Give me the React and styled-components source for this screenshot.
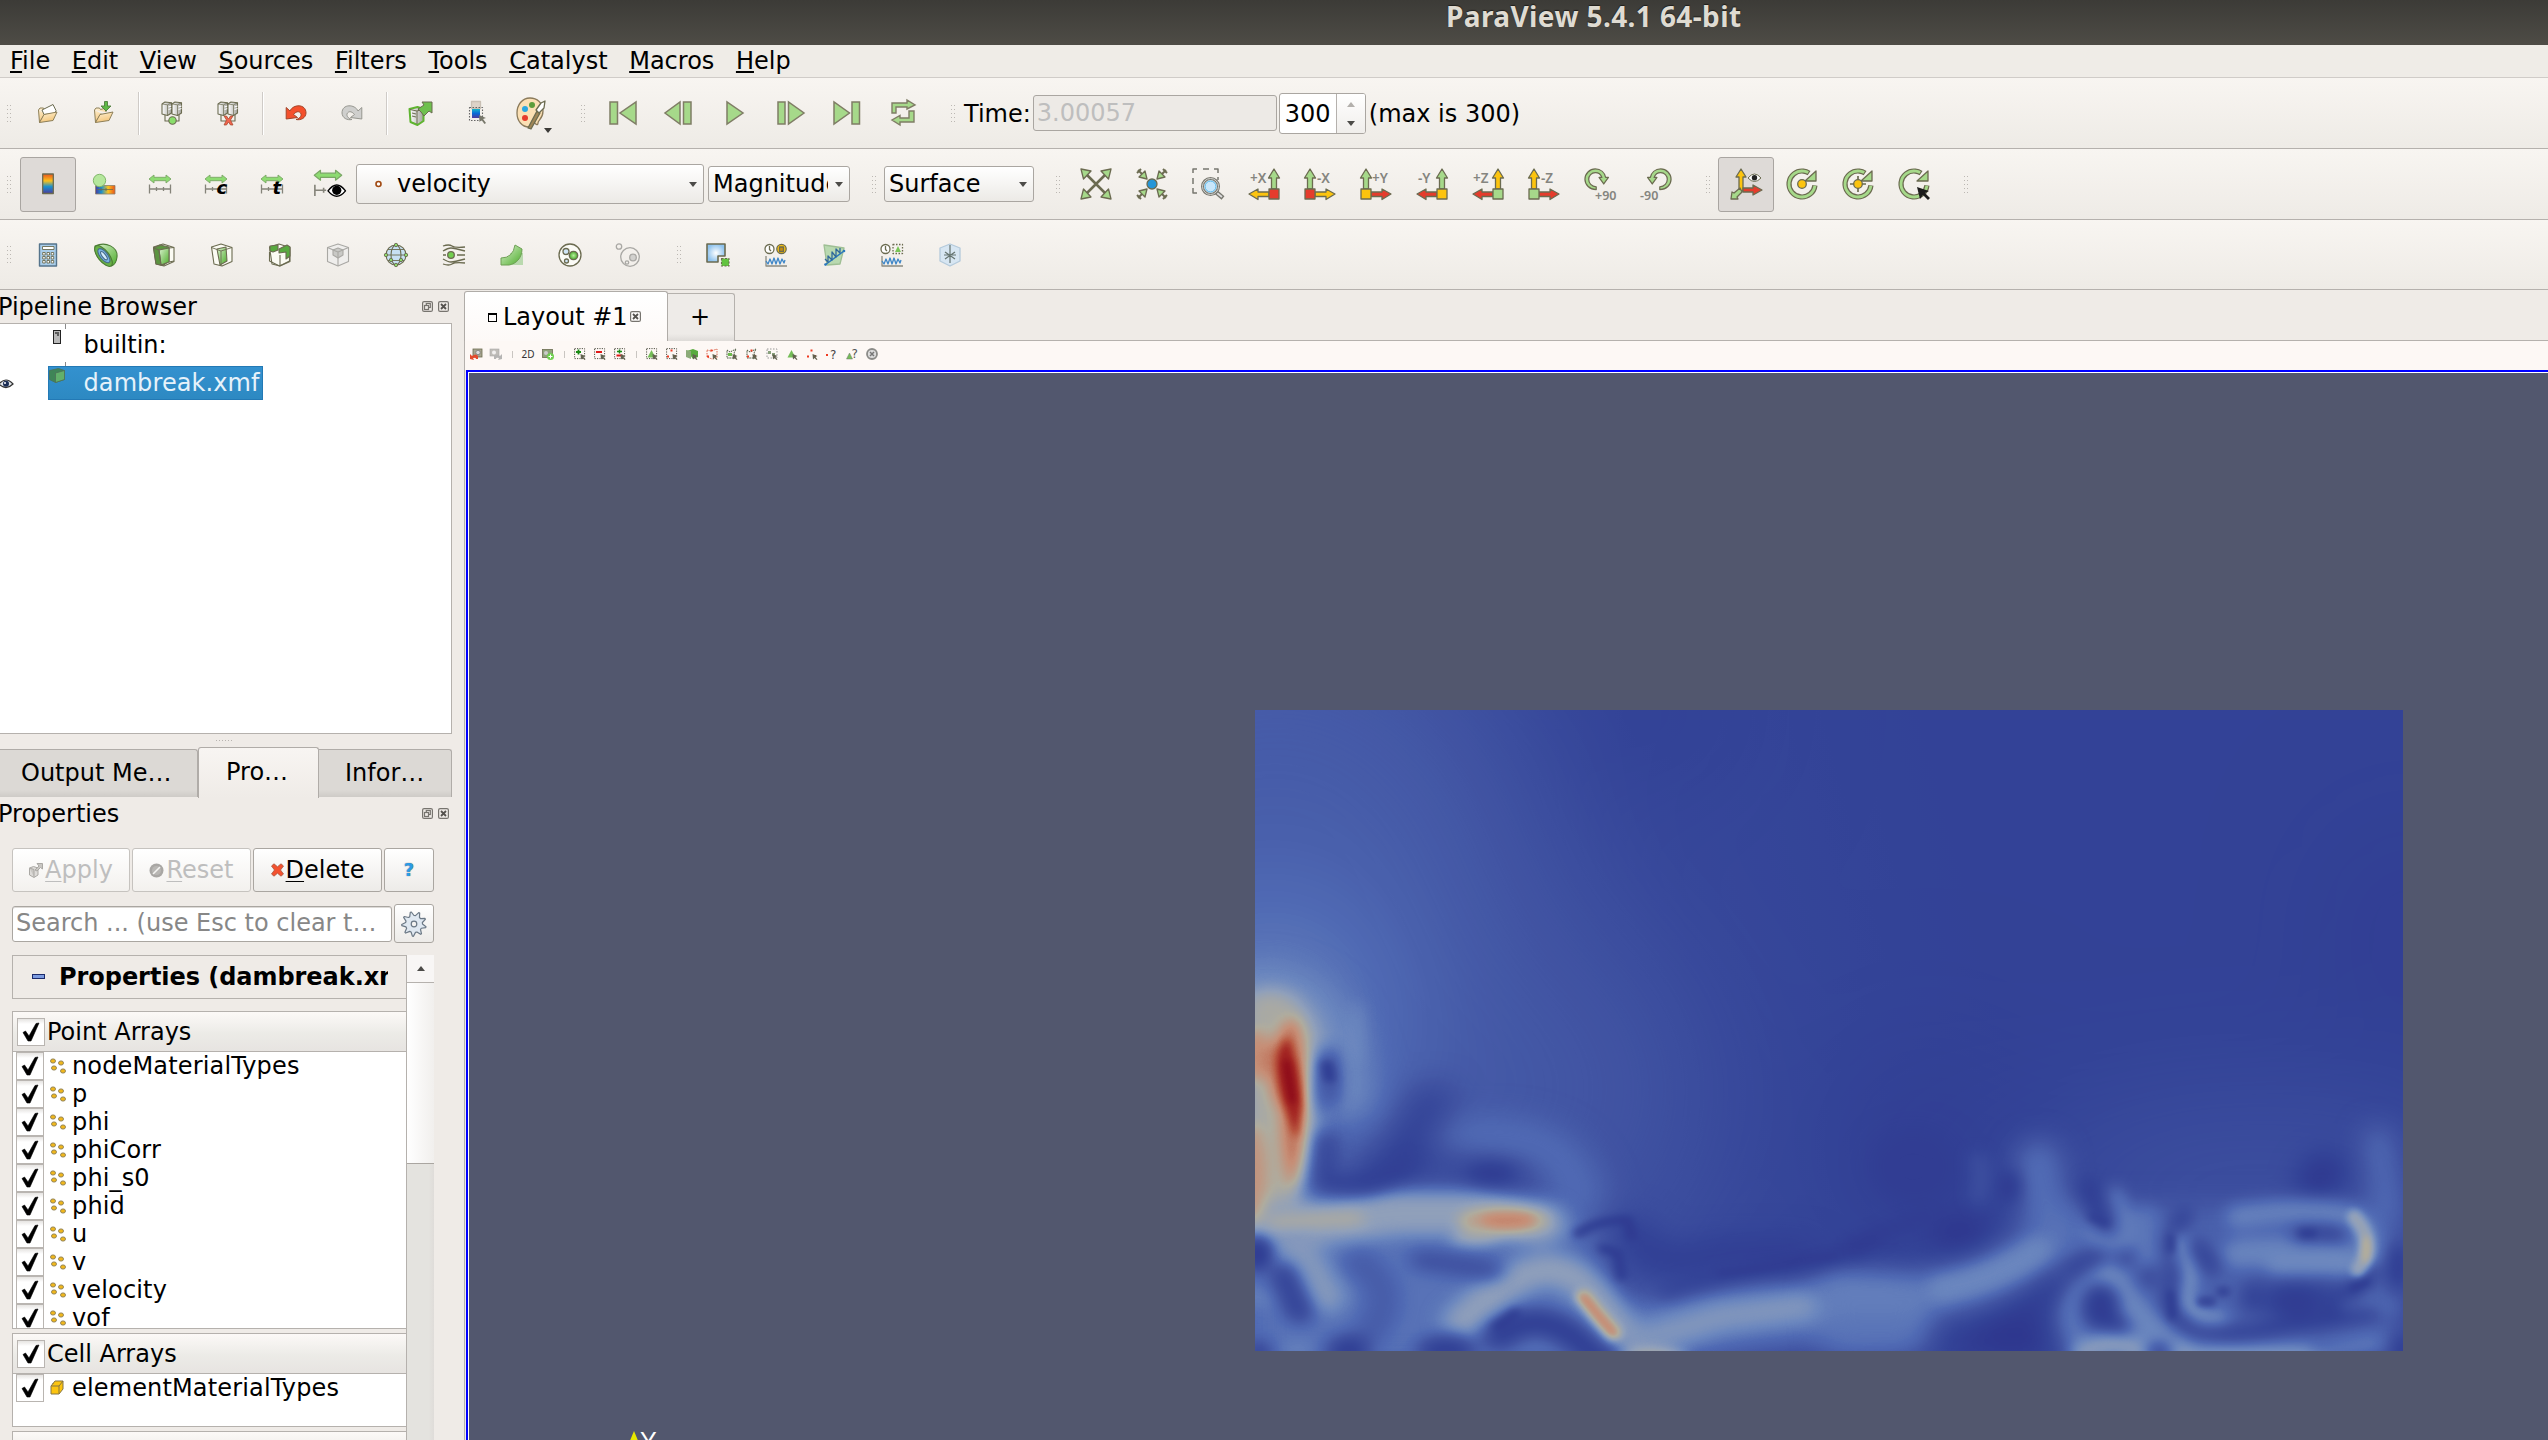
import React from "react";
import styled, { createGlobalStyle, css } from "styled-components";

const GlobalStyle = createGlobalStyle`
  * { box-sizing: border-box; }
  html, body { margin: 0; padding: 0; overflow: hidden; }
  body { font: 24px/28px "DejaVu Sans", sans-serif; color: #000; background: #efebe7; }
  svg { display: block; flex: none; overflow: visible; }
`;

const OL = "#6b6b50";
const GREEN = "#a6d98a";
const YEL = "#fcc40f";
const RED = "#e53c2c";

/* ---------- shell ---------- */
const Window = styled.div`
  width: 2548px; height: 1440px; display: flex; flex-direction: column; overflow: hidden; background: #efebe7;
`;
const TitleBar = styled.div`
  flex: none; height: 45px; display: flex; padding-left: 1446px;
  background: linear-gradient(#3c3b37, #4e4c46);
  color: #dfdbd2; font: 700 28px/33px "Noto Sans", sans-serif; letter-spacing: 0.4px; white-space: pre;
  text-shadow: 0 -1px 1px #1e1d1a;
`;
const MenuBar = styled.div`
  flex: none; height: 33px; display: flex; gap: 21.6px; padding: 2px 0 0 10px; border-bottom: 1px solid #d0ccc8; background: #efece7;
`;
const Mn = styled.span`
  text-decoration: underline; text-decoration-thickness: ${(p) => p.$w || 2}px; text-underline-offset: ${(p) => p.$o || 2}px;
  text-decoration-skip-ink: none;
`;
const ToolBar = styled.div`
  flex: none; height: ${(p) => p.$h || 71}px; display: flex; align-items: center; padding-left: 6px;
  background: linear-gradient(#f8f5f1, #eeebe6); border-bottom: 1px solid #b5b1ad;
`;
const Handle = styled.div`
  flex: none; width: 4px; height: 17px; margin-left: ${(p) => (p.$l || 0) + 1}px; margin-right: ${(p) => (p.$r || 0) + 1}px;
  background: radial-gradient(circle at 0.5px 0.5px, #bcb8b3 0.7px, transparent 0.9px) 0 0 / 3px 4px;
`;
const Tool = styled.div`
  position: relative; flex: none; width: ${(p) => p.$w || 56}px; height: 55px; display: flex; align-items: center; justify-content: center;
  border-radius: 3px; border: 1px solid transparent;
  ${(p) => p.$on && css`background: #dedad7; border-color: #a9a5a1;`}
`;
const Sep = styled.div`
  flex: none; width: 1px; height: 43px; margin: 0 5.5px; background: #cfcbc7; box-shadow: 1px 0 #fff;
`;
const Label = styled.span`white-space: pre; margin-left: ${(p) => p.$l || 0}px; padding-top: ${(p) => p.$t || 0}px;`;
const Caret = styled.i`
  flex: none; border: 4px solid transparent; border-bottom-width: 0; border-top: 5px solid ${(p) => p.$c || "#4c4b48"};
  ${(p) => p.$up && css`transform: rotate(180deg);`}
`;
const DropMark = styled.span`position: absolute; right: 7px; bottom: 7px; display: flex;`;
const Combo = styled.div`
  flex: none; width: ${(p) => p.$w}px; height: ${(p) => p.$h || 36}px; margin-left: ${(p) => p.$l || 0}px;
  display: flex; align-items: center; padding: 0 6px 0 4px; border: 1px solid #aaa6a1; border-radius: 3px;
  background: linear-gradient(#fff, #eceae6);
`;
const ComboText = styled.span`flex: 1; overflow: hidden; white-space: pre; margin-right: ${(p) => p.$r || 0}px;`;
const TimeField = styled.div`
  flex: none; width: 244px; height: 36px; padding: 3px 3px; border: 1px solid #aaa6a1; border-radius: 3px; background: #edeae6; color: #bebebe; margin-left: 2px;
`;
const Spin = styled.div`
  flex: none; width: 87px; height: 41px; margin: 0 3px 0 2px; display: flex; border: 1px solid #aaa6a1; border-radius: 3px; background: #fff; overflow: hidden;
`;
const SpinText = styled.div`width: 57px; padding: 6px 0 0 5px; border-right: 1px solid #b5b1ad;`;
const SpinBtns = styled.div`
  flex: 1; display: flex; flex-direction: column; align-items: center; justify-content: space-between; padding: 8px 0 7px; background: linear-gradient(#fff, #f0eeeb);
`;

/* ---------- docks ---------- */
const Main = styled.div`flex: 1; min-height: 0; display: flex;`;
const Dock = styled.div`flex: none; width: 464px; display: flex; flex-direction: column; overflow: hidden;`;
const DockTitle = styled.div`
  flex: none; height: ${(p) => p.$h}px; padding: 3px 15px 0 0; display: flex; align-items: flex-start; gap: 5px;
`;
const DockName = styled.span`flex: 1; margin-left: -2px;`;
const DockBtn = styled.span`display: flex; padding-top: 8px;`;
const Tree = styled.div`
  flex: none; width: 452px; height: 411px; border: 1px solid #b5b1ad; border-left: 0; background: #fff;
`;
const TreeRow = styled.div`height: ${(p) => p.$h}px; display: flex; position: relative;`;
const TreeEye = styled.div`width: 48px; padding-top: 13px;`;
const TreeItem = styled.div`
  height: ${(p) => p.$h}px; width: ${(p) => p.$w || 215}px; display: flex; border: 1px solid transparent; padding-top: ${(p) => p.$t}px;
  ${(p) => p.$sel && css`background: linear-gradient(#3391cf, #2d89c2); border-color: #2379b5; color: #e6f2fa; letter-spacing: 0.1px;`}
`;
const TreeIcon = styled.div`width: 34.5px; margin-top: ${(p) => p.$t}px; padding-left: ${(p) => p.$l}px;`;
const Branch = styled.div`
  position: absolute; left: 65px; top: 0; width: 1px; height: 100%;
  background: linear-gradient(#8a8a8a, #8a8a8a) 0 0 / 1px 5px no-repeat, linear-gradient(#8a8a8a, #8a8a8a) 0 100% / 1px 4px no-repeat;
`;
const Splitter = styled.div`
  flex: none; height: 13px; display: flex; justify-content: center; align-items: center; width: 448px;
  &::before { content: ""; width: 17px; height: 1px; background: repeating-linear-gradient(90deg, #b8b4b0 0 1px, transparent 1px 3px); }
`;
const Tabs = styled.div`flex: none; height: 50px; display: flex; align-items: flex-start; width: 452px;`;
const Tab = styled.div`
  width: ${(p) => p.$w}px; height: 48px; margin-top: 2px; padding: 9px 0 0 ${(p) => p.$p}px;
  border: 1px solid #b0aca8; border-bottom: 0; border-left: 0; border-radius: 0 3px 0 0;
  background: linear-gradient(#dcd9d5 85%, #cecbc7);
  ${(p) => p.$on && css`height: 51px; margin-top: 0; padding-top: 10px; border-left: 1px solid #b0aca8; border-radius: 3px 3px 0 0; background: linear-gradient(#f8f5f2, #efebe7);`}
`;
const ButtonRow = styled.div`flex: none; display: flex; gap: 2px; padding-left: 12px; margin-bottom: ${(p) => p.$b}px; align-items: center;`;
const Button = styled.div`
  width: ${(p) => p.$w}px; height: ${(p) => p.$h || 44}px; display: flex; align-items: center; justify-content: center; gap: 2px;
  border: 1px solid ${(p) => (p.$off ? "#c6c3bf" : "#aaa6a1")}; border-radius: 3px; background: linear-gradient(#fff, ${(p) => (p.$off ? "#f3f1ee" : "#edebe8")});
  color: ${(p) => (p.$off ? "#bebebe" : "#000")};
`;
const Search = styled.div`
  width: 380px; height: 36px; padding: 2px 3px; border: 1px solid #aaa6a1; border-radius: 3px; background: #fff; color: #878787; white-space: pre; overflow: hidden;
  box-shadow: inset 0 1px #dddad7;
`;
const ScrollArea = styled.div`flex: 1; min-height: 0; display: flex; padding-left: 12px; overflow: hidden;`;
const ScrollBody = styled.div`width: 394px; display: flex; flex-direction: column; overflow: hidden;`;
const GroupHead = styled.div`
  flex: none; height: 44px; margin-bottom: 12px; display: flex; align-items: center; border: 1px solid #b5b1ad; border-right: 0; padding: 0 18px 0 19px; font-weight: 700;
`;
const GroupName = styled.span`margin-left: 14px; flex: 1; overflow: hidden; white-space: pre; letter-spacing: -0.05px;`;
const Minus = styled.i`width: 13px; height: 5px; border: 1px solid #1b2a6b; background: #7c9be0; flex: none; margin-bottom: 2px;`;
const ListHead = styled.div`
  flex: none; height: 41px; display: flex; padding: 6px 0 0 4px; gap: 2px; border: 1px solid #b5b1ad; border-right: 0;
  background: linear-gradient(#fcf9f7, #ecebe7 55%, #e7e4e1);
`;
const List = styled.div`
  flex: none; height: ${(p) => p.$h}px; margin-bottom: 4px; padding-left: 3px; border-left: 1px solid #b5b1ad; border-bottom: 1px solid #b5b1ad; background: #fff; overflow: hidden;
`;
const ListRow = styled.div`height: 28px; display: flex; align-items: flex-start; letter-spacing: 0.15px;`;
const RowIcon = styled.span`width: 28px; padding: 6px 0 0 6px;`;
const Check = styled.span`
  flex: none; width: 28px; height: 28px; border: 1px solid #b9b5b1; background: linear-gradient(#e6e4e2, #fff 5px); display: flex; align-items: center; justify-content: center;
`;
const RowText = styled.span`margin-top: 0;`;
const Scroll = styled.div`width: 28px; border-left: 1px solid #b5b1ad; background: linear-gradient(90deg, #e4e3df 80%, #dfdcd9); display: flex; flex-direction: column;`;
const ScrollUp = styled.div`height: 28px; border-bottom: 1px solid #b5b1ad; background: #f8f6f5; display: flex; align-items: center; justify-content: center;`;
const Thumb = styled.div`height: 181px; border-bottom: 1px solid #aaa6a1; background: linear-gradient(90deg, #fff, #f1efed);`;

/* ---------- view ---------- */
const View = styled.div`flex: 1; min-width: 0; display: flex; flex-direction: column; padding-top: 1px;`;
const ViewTabs = styled.div`flex: none; height: 50px; display: flex; align-items: flex-start; box-shadow: inset 0 -1px #b5b1ad;`;
const ViewTab = styled.div`
  width: 204px; height: 50px; display: flex; padding: 11px 0 0 23px; border: 1px solid #b0aca8; border-bottom: 0; border-radius: 3px 3px 0 0; background: linear-gradient(#fff, #fdf9f7);
`;
const Square = styled.i`width: 9px; height: 9px; border: 1px solid #000; border-top-width: 2px; margin: 10px 6px 0 0; flex: none;`;
const AddTab = styled.div`
  width: 67px; height: 48px; margin-top: 2px; padding: 9px 0 0 22px; border: 1px solid #b5b1ad; border-left: 0; border-bottom: 0; border-radius: 0 3px 0 0; background: linear-gradient(#eeebe8 85%, #dedbd8);
`;
const MiniBar = styled.div`flex: none; height: 29px; display: flex; align-items: center; padding: 0 0 3px 1px; background: #fdf8f5; border-left: 1px solid #b5b1ad;`;
const Mini = styled.div`width: 20px; display: flex; justify-content: center; font: 10px/12px "Noto Sans", sans-serif; color: #333;`;
const MiniSep = styled.div`width: 1px; height: 7px; margin: 0 5.5px; background: #c9c5c1;`;
const Frame = styled.div`flex: 1; min-height: 0; padding-left: 1px; border-left: 1px solid #b5b1ad; display: flex;`;
const Canvas = styled.div`
  flex: 1; border: 2px solid #0000ff; border-right: 0; border-bottom: 0; box-shadow: inset 1px 1px #fff; background: #52576e; display: flex; overflow: hidden;
  padding: 1px 0 0 1px; position: relative;
`;
const Plot = styled.div`margin: 337px 0 0 786px; width: 1148px; height: 641px;`;
const Axis = styled.div`
  position: absolute; left: 161px; top: 1058px; display: flex; align-items: flex-start; color: #fff; font: 25px/22px "Liberation Sans", sans-serif;
`;

/* ---------- icons ---------- */
const Svg = ({ s = 24, v, children, ...r }) => (
  <svg width={s} height={s} viewBox={`0 0 ${v || s} ${v || s}`} fill="none" stroke={OL} strokeWidth="1.3" strokeLinejoin="round" {...r}>{children}</svg>
);
const HiddenDefs = styled.svg`position: absolute;`;
const Defs = () => (
  <HiddenDefs width="0" height="0">
    <defs>
      <linearGradient id="fold" x2="0.4" y2="1"><stop stopColor="#fff3d8" /><stop offset="1" stopColor="#f3c579" /></linearGradient>
      <linearGradient id="steel" x2="1"><stop stopColor="#ffffff" /><stop offset="1" stopColor="#a3a39c" /></linearGradient>
      <linearGradient id="grn" x2="1" y2="1"><stop stopColor="#dcf3d0" /><stop offset="1" stopColor="#4dac2b" /></linearGradient>
      <linearGradient id="rb" x2="0" y2="1"><stop stopColor="#e8541d" /><stop offset=".35" stopColor="#fbc11a" /><stop offset=".65" stopColor="#1791d1" /><stop offset="1" stopColor="#4e3a9c" /></linearGradient>
      <linearGradient id="pick" x2="0" y2="1"><stop stopColor="#19b5c9" /><stop offset=".5" stopColor="#0a6ad6" /><stop offset="1" stopColor="#4e3a9c" /></linearGradient>
      <linearGradient id="rbh" x2="1"><stop stopColor="#4e3a9c" /><stop offset=".3" stopColor="#1791d1" /><stop offset=".65" stopColor="#fbc11a" /><stop offset="1" stopColor="#e8541d" /></linearGradient>
      <radialGradient id="ball"><stop stopColor="#b6ee9c" /><stop offset="1" stopColor="#46a828" /></radialGradient>
      <radialGradient id="glow"><stop stopColor="#fff" /><stop offset="1" stopColor="#8fc3ee" /></radialGradient>
    </defs>
  </HiddenDefs>
);
const Folder = ({ save }) => (
  <Svg strokeWidth="1"><path d="M2.500 9l1.500-2h3.500l1 1.500L14 7v4M2.500 9l1 12.500 5.500-9" fill="url(#fold)" stroke="#8d7f58" />
    {save ? <path d="M12.500 .5h3v4.500h3.500l-5 5-5-5h3.500z" fill="#5fb946" strokeWidth=".9" stroke="#4f7d3c" /> : <path d="M6 9l11-5.500 3 6-1 3-11 1z" fill="#fff" />}
    <path d="M3.500 21.500l4.500-8L21 11l-4 8.500z" fill="url(#fold)" stroke="#8d7f58" /></Svg>
);
const Server = ({ bad }) => (
  <Svg strokeWidth="1.100">{[2, 12].map((x) => <g key={x}><path d={`M${x} 3l3-2 6.500 .7V12l-4 2.500L${x} 13z`} fill="url(#steel)" /><path d={`M${x} 3l5.500 .8 4-2M${x + 5.5} 4v10`} strokeWidth=".7" /><path d={`M${x + 6.5} 6l3-1M${x + 6.500} 8.500l3-1`} stroke="#fff" /></g>)}
    <path d="M5 14v6h14v-6" />
    {bad ? <path d="M8 15h2.500l2 3 2-3H17l-2.500 4L17 24h-2.500l-2-3-2 3H8l2.500-5z" fill="#f0644e" strokeWidth=".7" stroke="#a14529" /> : <circle cx="12.500" cy="19.500" r="3.700" fill="#8ade6c" />}</Svg>
);
const Undo = ({ redo }) => (
  <Svg strokeWidth="1"><g transform={redo ? "matrix(-1 0 0 1 24 0)" : undefined}><path d="M2.200 18V6.500L6 10c3-7 16-7.500 16 2-.3 5-5 7.500-10 6.500 4.500-1 6-4.500 4.500-6.500-2-2.500-5-1-7 1.500l4 3z" fill={redo ? "#cfcfcd" : "#f4502c"} stroke={redo ? "#96968f" : "#a14529"} /></g></Svg>
);
const Cube = ({ kind }) => {
  const off = kind === "off";
  const c = off ? "#a9a8a4" : OL;
  return (
    <Svg stroke={c} strokeWidth="1.100">
      {!off && kind !== "full" && <path d="M1.500 4L11 1l11 3.500v14L12 23l-8-2z" fill="#fbfbf3" />}
      {kind === "clip" && <><path d="M1.500 5L8 2l9 2v14l-6 4.500L4 21z" fill="#5c9440" /><path d="M7 7l10-2v14l-8 3z" fill="url(#grn)" /><path d="M1.500 5L7 7l2 15M17 5l5-.5M17 19l5-1" /></>}
      {kind === "slice" && <><path d="M7 6l9-2 1 14-7 4z" fill="url(#grn)" /><path d="M1.500 4.500L11 8v15M11 8l11-3.500" strokeWidth=".9" /></>}
      {kind === "thr" && <><path d="M1.500 9v9l10 5 10-5V9M12 12v11" /><path d="M2 3l8-1v5l-5 2-3-1z" fill="#58a93f" /><path d="M11 6l8-4 3 2v9l-4 3V9l-7 1z" fill="#58a93f" /></>}
      {off && <><path d="M1.500 4.500L12 1l10.500 3.500v14L12 23 1.500 18.500z" fill="#efeeec" /><path d="M1.500 4.500L12 9l10.500-4.500M12 14v9" /><path d="M7 7l5-2 5 2v5l-5 3-5-3z" fill="#c9c9c6" /><path d="M7 7l5 2 5-2M12 9v6" /></>}
      {kind === "full" && <><path d="M1.500 8l8-2 6 2v12l-6 4-7-3z" fill="url(#steel)" stroke="#5fb430" strokeWidth="2" /><path d="M2 8.500l7 1.500v13M9 10l6-2M4 12l4 1M4 15l4 1" strokeWidth="1" /><path d="M10 8l6-4-2-3h10v11l-3-2-5 5-3-4z" fill="#6fc04e" strokeWidth="1" /></>}
    </Svg>
  );
};
const Palette = () => (
  <Svg s={32}><path d="M14 1C6 1 1 8 1 16s5 14 12 14c4 0 2-4 5-5 1 2 4 4 4 1 0-3 5-4 5-12C27 6 21 1 14 1z" fill="#fbe0b4" stroke="#8b7a5a" /><circle cx="16" cy="8" r="3" fill="#5d9d3b" stroke="none" /><circle cx="9" cy="12" r="3" fill="#2aa7e0" stroke="none" /><circle cx="9" cy="21" r="3" fill={RED} stroke="none" /><path d="M12 31l9-17 3 2-9 16z" fill="#a08656" /><path d="M20 13l5-7 4-2-1 7-5 5z" fill="#fff" /></Svg>
);
const PickColor = () => (
  <Svg><rect x="7.500" y="0.500" width="9" height="7" fill="#ddd3c8" stroke="#c9c0b5" /><rect x="8" y="8" width="8" height="9" fill="url(#pick)" stroke="none" /><rect x="5.500" y="6.500" width="13" height="13" strokeDasharray="1.500 1.500" stroke="#666" strokeWidth="1.100" /><path d="M15 14l7 3-3 1 3 4-1.500 1-3-4-2 2z" fill="#77776a" stroke="none" /></Svg>
);
const Play = ({ kind }) => (
  <svg width="32" height="26" viewBox="0 0 32 26" fill={GREEN} stroke="#7f7d65" strokeWidth="1.500">
    {kind === "first" && <path d="M3 2h7.500v22H3zM29 2v22L13 13z" />}
    {kind === "prev" && <path d="M17 2v22L2 13zM20.500 2H28v22h-7.500z" />}
    {kind === "play" && <path d="M8 2v22l16-11z" />}
    {kind === "next" && <path d="M3 2h7v22H3zM13.500 2v22L29 13z" />}
    {kind === "last" && <path d="M3 2v22l15.500-11zM21 2h7.500v22H21z" />}
    {kind === "loop" && <path d="M5 13V3h15V0l8 5-8 4V7H9v6zM27 11v11H13v3l-8-5 8-4.500V18h9v-7z" strokeWidth="1.400" />}
  </svg>
);
const ColorMap = () => <Svg><rect x="6.700" y="2" width="10.600" height="19.500" fill="url(#rb)" /></Svg>;
const EditMap = () => <Svg><rect x="3.500" y="13.500" width="19.500" height="8.500" fill="url(#rbh)" stroke="#8d8068" strokeWidth=".8" /><circle cx="7.500" cy="8.500" r="6.200" fill="#b5e79c" stroke="#82b76b" strokeWidth="1" /><path d="M5 17.500h16M9 16v3M14 16v3" strokeWidth=".8" /></Svg>;
const Rescale = ({ t, eye }) => (
  <Svg s={eye ? 30 : 24} v={24}>
    <path d={eye ? "M1 5l5-4v2.300h12V1l5 4-5 4V6.700H6V9z" : "M1 7l5-4v2.300h12V3l5 4-5 4V8.700H6V11z"} fill="#8ddb71" strokeWidth=".9" stroke="#7aa765" />
    <path d="M1.500 12.500v9M22.500 12.500v9M1.500 17h21M8.500 15v4M15.500 15v4" stroke="#85847a" />
    {t && <text x="12.500" y="21.500" fontFamily="DejaVu Sans" fontWeight="700" fontStyle="italic" fontSize="18" fill="#000" stroke="none">{t}</text>}
    {eye && <g><rect x="10.500" y="11.500" width="15" height="11" fill="#f3f0ec" stroke="none" /><path d="M12 17.500q7-9.500 14 0-7 8.500-14 0z" fill="#fff" stroke="#000" strokeWidth="1.100" /><circle cx="19" cy="17" r="3.700" fill="#000" stroke="none" /></g>}
  </Svg>
);
const Calc = () => <Svg><rect x="3.500" y="1" width="17" height="22" fill="#a9cdea" stroke="#55748c" strokeWidth="1.400" /><rect x="6.500" y="3.500" width="11.500" height="3" fill="#fff" strokeWidth=".9" />{[9.5, 13.5, 17.5].map((y) => [6.7, 11, 15.2].map((x) => <rect key={x + "-" + y} x={x} y={y} width="2.500" height="2.500" fill="#fff" strokeWidth=".9" />))}</Svg>;
const Contour = () => <Svg strokeWidth="1.100"><path d="M1 3C12-2 24 4 23 14c-.5 5-3 8-5.500 9C7 21 0 12 1 3z" fill="url(#grn)" stroke="#4c7c35" /><g transform="rotate(-38 9.500 13)"><ellipse cx="9.500" cy="13" rx="5.500" ry="12.500" fill="#68b046" stroke="#4c7c35" /><ellipse cx="10" cy="13" rx="3.800" ry="8.500" fill="#79b3e3" stroke="#456a8a" /><ellipse cx="10" cy="13" rx="1.800" ry="5" fill="#d4ecfb" stroke="#456a8a" /></g></Svg>;
const Glyph = () => <Svg strokeWidth="1.100"><circle cx="12" cy="12" r="10" fill="#c7e0f3" /><ellipse cx="12" cy="12" rx="5" ry="10" /><path d="M2 12h20M4 6.500h16M4 17.500h16" strokeWidth=".9" />{[[12, 2], [12, 22], [2, 12], [22, 12], [7, 17], [17, 17]].map(([x, y]) => <circle key={x + "," + y} cx={x} cy={y} r="1.700" fill="#8bd96b" strokeWidth=".9" />)}</Svg>;
const Stream = () => <Svg><path d="M1 3q6-2 9 0t13 1M1 8q5-3 8-3t14 3M1 16q5 3 8 3t14-3M1 21q6 2 9 0t13-1M15 12h8M1 12h3" /><circle cx="9" cy="12" r="3.300" fill="#72cf50" /></Svg>;
const Warp = () => <Svg><rect x="10" y="10" width="13" height="12" fill="#b9d9ae" stroke="none" /><path d="M1 15q12 0 14-13l7 4c0 9-6 15-13 16H1z" fill="url(#grn)" stroke="#6ea055" strokeWidth="1" /></Svg>;
const Group = () => <Svg><circle cx="12" cy="12" r="11" fill="#fbfbf6" /><circle cx="8" cy="8.500" r="3" fill="#cfe5f5" /><circle cx="15.500" cy="12.500" r="4.200" fill="url(#ball)" /><circle cx="8.500" cy="18" r="2" fill="#cfe5f5" /></Svg>;
const Extract = () => <Svg stroke="#a9a8a4"><circle cx="3" cy="3.500" r="2.700" /><circle cx="14" cy="14" r="9.300" /><circle cx="17" cy="14.500" r="3.300" fill="#d2d1ce" /><circle cx="11" cy="19.500" r="1.700" /></Svg>;
const SelBox = () => <Svg><path d="M1 1h18v12h-7v6H1z" fill="url(#glow)" strokeWidth="1.600" /><rect x="15.500" y="15.500" width="7.500" height="7.500" fill="#62c33f" strokeDasharray="2 1.500" strokeWidth="1.100" /></Svg>;
const TimePlot = ({ box }) => <Svg><path d="M2 13v10h21" stroke="#8b8b80" /><path d="M2 18l2 3 2-5 2 5 2-6 2 6 2-6 2 6 2-5 2 4 1-3" stroke="#3d86c8" /><circle cx="5.500" cy="6" r="4.500" fill="#fff" /><path d="M5.500 3v3.500L7 8" />{box ? <><rect x="13" y="1.500" width="9.500" height="9" strokeDasharray="1.500 1.500" /><path d="M15 9l3-6 3 6z" fill="#79c657" stroke="none" /></> : <><circle cx="17.500" cy="6" r="4.700" fill={YEL} /><path d="M15.500 4h4v4.500h-4z" fill="#c68c0f" /></>}</Svg>;
const LinePlot = () => <Svg><path d="M2 2l20 3-4 16-13 1z" fill="#b9d9b0" stroke="#9fbf94" /><path d="M3 22L22 8" stroke="#2a78bd" strokeWidth="1.500" /><path d="M3 16l3 3V13l4 4V9l4 5V6l4 4V5" stroke="#30689a" /><circle cx="22" cy="8" r="1.300" fill="#2a78bd" stroke="none" /><circle cx="3.500" cy="21.500" r="1.300" fill="#2a78bd" stroke="none" /></Svg>;
const Probe = () => <Svg><path d="M2 5l10-4 10 4v13l-10 5-10-5z" fill="#d7e6f2" stroke="#b4cadb" /><path d="M12 2v18M6 12h12M7 9l10 7M17 9L7 16" stroke="#64736f" strokeWidth="1.200" /></Svg>;
const ResetCam = () => <Svg s={32}><path d="M6 6l20 20M26 6L6 26" strokeWidth="2.500" /><path d="M1 1l10 2-7.500 8zM31 1l-10 2 7.500 8zM1 31l10-2-7.500-8zM31 31l-10-2 7.500-8z" fill={GREEN} /></Svg>;
const ZoomData = () => <Svg s={32}><path d="M2 2l6 6M30 2l-6 6M2 30l6-6M30 30l-6-6M1 5l4-4M31 5l-4-4M1 27l4 4M31 27l-4 4" strokeWidth="2" /><path d="M11 11L9 3 3 9zM21 11l2-8 6 6zM11 21l-2 8-6-6zM21 21l2 8 6-6z" fill={GREEN} /><circle cx="16" cy="16" r="5" fill="#2596d8" /></Svg>;
const ZoomBox = () => <Svg s={32}><path d="M1 5V1h4M11 1h6M22 1h4v4M1 10v6M1 20v5h4M26 9v3" stroke="#77776f" strokeWidth="1.500" /><path d="M24 24l7 6" stroke="#77776f" strokeWidth="4.500" /><path d="M25 25l5 4" stroke="#ddd" strokeWidth="1.800" /><circle cx="18.500" cy="18.500" r="8" fill="#e9eef2" stroke="#77776f" strokeWidth="3" /><circle cx="18.500" cy="18.500" r="8" stroke="#d6d6d2" strokeWidth="1" /><circle cx="18.500" cy="18.500" r="5.500" fill="#c8e6fa" stroke="#4db3e8" strokeWidth="1" /></Svg>;
const AxisIcon = ({ t, up, side, box }) => {
  const left = ["+X", "-Y", "+Z"].includes(t);
  const lx = { "+X": 2, "-X": 13, "+Y": 12, "-Y": 2, "+Z": 1, "-Z": 13 }[t];
  return (
    <Svg s={32}>
      <g transform={left ? undefined : "matrix(-1 0 0 1 32 0)"}>
        <path d="M26 1l5.500 9h-3v11h-5V10h-3z" fill={up} /><path d="M1 26l9-5v3h11v4.500H10v3z" fill={side} /><rect x="21" y="21" width="10" height="10" fill={box} />
      </g>
      <text x={lx} y="15" fontFamily="Noto Sans" fontWeight="600" fontSize="13.500" fill="#85857f" stroke="none">{t}</text>
    </Svg>
  );
};
const Rotate = ({ neg }) => (
  <Svg s={32}><g transform={neg ? "matrix(-1 0 0 1 32 0)" : undefined}><path d="M13 20v3C6 23 1 18 1 12S6 1 12 1s10 4 11 9h3l-5 7-5-7h3c-1-3-4-5-7-5-4 0-7 3-7 7s3 8 8 8z" fill={GREEN} transform="scale(.94)" /></g>
    <text x={neg ? 0 : 11} y="31.500" fontFamily="Noto Sans" fontWeight="600" fontSize="12.500" fill="#85857f" stroke="none">{neg ? "-90" : "+90"}</text></Svg>
);
const ShowAxes = () => <Svg s={32}><path d="M11 1l5 8h-3v14H9V9H6z" fill={YEL} /><path d="M13 20h10v-3l9 5-9 5v-3H13z" fill={RED} /><path d="M12 24l-5 5 1 2H1l1-7 2 1 6-5z" fill={GREEN} /><path d="M18 10q6.500-8 13 0-6.500 7-13 0z" fill="#fff" strokeWidth="1" /><circle cx="24.500" cy="9.700" r="2.700" fill="#222" stroke="none" /></Svg>;
const Center = ({ kind }) => (
  <Svg s={32}><circle cx="16" cy="16" r="13" stroke={OL} strokeWidth="5.200" strokeDasharray="67 15" transform="rotate(6 16 16)" /><circle cx="16" cy="16" r="13" stroke={GREEN} strokeWidth="2.800" strokeDasharray="65.500 16.200" transform="rotate(8 16 16)" /><path d="M30 3v10H19z" fill={GREEN} />
    {kind !== "pick" && <circle cx="16" cy="16" r="4.300" fill={YEL} />}
    {kind === "cross" && <path d="M16 8v4M16 20v4M8 16h4M20 16h4" strokeWidth="1.700" />}
    {kind === "pick" && <path d="M19 19l12 4-4 2 5 5-2 2-5-5-3 4z" fill="#1c1c1c" stroke="none" />}</Svg>
);
const Win = ({ x }) => <svg width="11" height="11" viewBox="0 0 11 11" fill="none" stroke="#77746f" strokeWidth="1.200"><rect x=".6" y=".6" width="9.800" height="9.800" rx="1.500" />{x ? <path d="M3 3l5 5M8 3L3 8" stroke="#55524e" strokeWidth="1.800" /> : <><rect x="4.300" y="2.500" width="4" height="4" /><rect x="2.500" y="4.500" width="4" height="4" fill="#efebe7" /></>}</svg>;
const Tick = () => <svg width="18" height="20" viewBox="0 0 18 20" fill="none" stroke="#000"><path d="M1 10.500l2.500-1.500 3.500 5L14 1.500l3-.5L9 19H6z" fill="#000" strokeWidth=".6" /></svg>;
const Points = () => <svg width="17" height="16" viewBox="0 0 17 16" fill="#f0b71c" stroke="#8a7a4c" strokeWidth=".9">{[[3, 3], [11, 5], [4, 10], [13, 13]].map(([x, y]) => <ellipse key={y} cx={x} cy={y} rx="2.500" ry="2.100" />)}</svg>;
const Cell = () => <svg width="14" height="15" viewBox="0 0 14 15" fill={YEL} stroke="#857443" strokeWidth="1"><path d="M1 6l4-5h8v8l-4 5H1z" /><path d="M1 6h8v8M9 6l4-5M3 4v-1" /></svg>;
const Eye = () => <svg width="14" height="10" viewBox="0 0 14 10"><path d="M-1 5q7-8 14 0-7 7-14 0z" fill="#dfe3e8" stroke="#333" strokeWidth="1.200" /><circle cx="6" cy="4.700" r="3" fill="#1b2d55" /><circle cx="5" cy="4" r="1" fill="#fff" /></svg>;
const Host = () => <svg width="8" height="14" viewBox="0 0 8 14"><rect x=".5" y=".5" width="7" height="13" fill="#b9b9b9" stroke="#222" /><path d="M2 3h4M4 5h2" stroke="#000" /></svg>;
const GreenCube = () => <svg width="16" height="15" viewBox="0 0 16 15" stroke="#4d7058" strokeWidth=".8"><path d="M.5 2.500l9-2 6 2v9l-9 3-6-3z" fill="#3f8557" /><path d="M6.500 5l9-2.500v9l-9 3z" fill="#62b06a" /></svg>;
const ApplyIcon = () => <svg width="14" height="16" viewBox="0 0 14 16" fill="#dddbd8" stroke="#aaa8a4"><path d="M.5 6l4-1.500L9 6v7l-4 2.500L.5 13z" /><path d="M.5 6L5 7.500V15M6 8l4-4-2-2.500h5.500V7l-2-1.500L8 9z" fill="#c9c7c3" /></svg>;
const ResetIcon = () => <svg width="15" height="15" viewBox="0 0 15 15"><circle cx="7.500" cy="7.500" r="7" fill="#a9a7a4" /><circle cx="7.500" cy="7.500" r="4.500" fill="#b9b7b4" /><path d="M4 11l7-7" stroke="#f4f4f2" strokeWidth="1.600" /></svg>;
const DelIcon = () => <svg width="13" height="14" viewBox="0 0 13 14"><path d="M.5 3L3 .8l3.500 3L10 .8 12.500 3 9.500 7l3 4-2.500 2.200-3.500-3-3.500 3L.5 11l3-4z" fill="#f4512f" stroke="#a8553e" strokeWidth=".8" /></svg>;
const HelpText = styled.span`font: 700 18px/20px "DejaVu Sans", sans-serif; color: #2a9be6; text-shadow: 0 0 1px #555;`;
const Gear = () => (
  <svg width="26" height="26" viewBox="0 0 26 26" fill="#dfe8f1" stroke="#6b7885" strokeWidth="1.200">
    <path d={Array.from({ length: 36 }, (_, i) => { const k = i % 4; const r = k === 1 || k === 2 ? 12.3 : 8.5; const a = ((i + (k === 1 ? 0.25 : k === 2 ? -0.25 : 0)) * Math.PI) / 18; return `${i ? "L" : "M"}${(13 + r * Math.cos(a)).toFixed(2)} ${(13 + r * Math.sin(a)).toFixed(2)}`; }).join("") + "Z"} strokeLinejoin="round" />
    <circle cx="13" cy="13" r="2.800" fill="#f4f3f1" />
  </svg>
);
const M = ({ k }) => {
  const cursor = <path d="M6.500 6l5 2-2 1 2 2.500-1 .5-2-2-1.500 1.500z" fill="#62624f" />;
  const dots = <rect x=".6" y=".6" width="10" height="10" fill="none" stroke="#55554a" strokeDasharray="1.200 1.200" />;
  const tri = <path d="M5.500 2l4 7.500h-8z" fill="#74bd57" />;
  const red = <g fill="#ef3b22"><rect x="4.500" y="1.500" width="2" height="2" /><rect x="1" y="7.500" width="2" height="2" /><rect x="8" y="7" width="2" height="2" /></g>;
  const g = {
    cam: <><rect x="3" y="1" width="9" height="8" fill="#a7a58f" stroke={OL} strokeWidth=".8" /><circle cx="8" cy="4.500" r="2.200" fill="#ddd" stroke="#666" strokeWidth=".6" /><path d="M0 11V6l2 2q4-3 6 0v3H6q0-2-3-1l1 2z" fill="#e34b2d" /></>,
    cam2: <g opacity=".7"><rect x="0" y="1" width="9" height="7" fill="#a7a5a0" stroke="#888" strokeWidth=".6" /><circle cx="4" cy="4.500" r="2" fill="#eee" /><path d="M12 11V6l-2 2Q6 5 4 8v3h2q0-2 3-1l-1 2z" fill="#999" /></g>,
    cam3: <><rect x=".5" y="1.500" width="10" height="8" fill="#8fa37b" stroke={OL} strokeWidth=".8" /><circle cx="4" cy="5" r="2" fill="#ccc" /><circle cx="8.500" cy="8.500" r="3.500" fill="#6fd04f" /><path d="M6.500 8.500h4M8.500 6.500v4" stroke="#fff" /></>,
    plus: <>{dots}<path d="M2 4h5M4.500 1.500v5" stroke="#188a12" strokeWidth="1.800" />{cursor}</>,
    minus: <>{dots}<path d="M2 4h6" stroke="#e01818" strokeWidth="2" />{cursor}</>,
    pm: <>{dots}<path d="M3 3.500h5M5.500 1.500v4" stroke="#188a12" strokeWidth="1.500" /><path d="M2.500 7.500h6" stroke="#e01818" strokeWidth="2" />{cursor}</>,
    t1: <>{dots}{tri}{cursor}</>, t2: <>{dots}{red}{cursor}</>,
    c1: <><path d="M1 3l6-2 5 2v6l-5 2z" fill="#58ab3d" /><path d="M0 2l5 1v8l-5-2z" fill="#8cab78" />{cursor}</>,
    c2: <><path d="M1 2l4 1 6-2v9l-5 1-5-2z" fill="none" stroke="#da6b52" strokeDasharray="1.500 1" />{red}{cursor}</>,
    p1: <><path d="M1 2l3 2 6-3-2 4 2 5-9 0z" fill="none" stroke="#44543a" strokeDasharray="1.500 .8" /><path d="M2 5h4v3H2z" fill="#6dbb4e" />{cursor}</>,
    p2: <><path d="M1 2l3 2 6-3-2 4 2 5-9 0z" fill="none" stroke="#44543a" strokeDasharray="1.500 .8" />{red}{cursor}</>,
    blk: <><rect x="1" y="1" width="10" height="9" fill="none" stroke="#999" strokeDasharray="1.500 1.500" /><path d="M2 3h3v3H2zM6 5h3v3H6z" fill="#89a17c" />{cursor}</>,
    t3: <>{tri}{cursor}</>, t4: <>{red}{cursor}</>,
    q1: <><rect x="0" y="6" width="2" height="2" fill="#ef3b22" /><text x="4" y="10.500" fontSize="12" fontFamily="DejaVu Sans" fill="#444">?</text></>,
    q2: <><path d="M3.500 5l3 6h-6z" fill="#74bd57" stroke="#777" strokeWidth=".5" /><text x="5.500" y="9.500" fontSize="12" fontFamily="DejaVu Sans" fill="#555">?</text></>,
    x: <><circle cx="6" cy="6" r="5" fill="#ddd" stroke="#8b8b88" strokeWidth="1.800" /><path d="M4 4l4 4M8 4l-4 4" stroke="#777" strokeWidth="1.500" /></>,
  };
  return <Mini>{k === "2D" ? "2D" : <svg width="12" height="12" viewBox="0 0 12 12">{g[k]}</svg>}</Mini>;
};

/* ---------- velocity magnitude field ---------- */
// Each stroke carries a normalised scalar; the final filter turns scalars into colours.
const gray = (v) => { const n = Math.round(v * 255); return `rgb(${n},${n},${n})`; };
// o: layer opacity; e: [cx, cy, rx, ry, value, rotation]; p: [path, width (0 = filled), value]
const LAYERS = [
  { f: "g", b: 75, e: [[20, 230, 250, 300, 0.24], [160, 380, 260, 180, 0.22], [20, 310, 120, 120, 0.4], [390, 0, 80, 50, 0.03], [1160, 230, 50, 100, 0.03], [670, 440, 60, 100, 0.03], [1000, 480, 240, 70, 0.2]] },
  { f: "a", b: 46, p: [["M40 930L800 920 900 1020 930 1400 40 1400Z", 0, 0.33], ["M40 260Q260 240 290 600", 120, 0.42], ["M560 720Q820 670 860 900", 110, 0.32], ["M970 1320Q1250 1220 1600 1230", 190, 0.38], ["M500 590L430 740 330 850", 70, 0.02], ["M400 790Q540 780 720 830", 50, 0.04], ["M980 990Q1060 1150 1180 1060L1400 1060", 80, 0.04]] },
  { f: "b", b: 40, p: [["M560 460H1520V920H540Z", 0, 0.26], ["M-60 740Q200 770 420 650 540 590 540 500", 140, 0.37], ["M520 520L500 330", 130, 0.32], ["M-60 860H140", 110, 0.33], ["M1450 260L1480 480", 70, 0.34], ["M560 680Q480 800 300 890", 70, 0.03]], e: [[430, 870, 120, 50, 0.0], [280, 550, 80, 55, 0.0], [150, 350, 120, 110, 0.05], [1290, 380, 55, 75, 0.0, 35], [1230, 750, 150, 60, 0.08]] },
  { f: "a", b: 26, p: [["M30 290Q160 210 218 400L208 720 170 900 30 980Z", 0, 0.58], ["M30 955Q200 985 400 940L600 940 760 970", 130, 0.5], ["M150 1010L235 1190", 100, 0.47], ["M570 1260Q720 1090 800 1110 880 1130 950 1290", 96, 0.5]] },
  { f: "a", b: 24, o: 0.8, p: [["M900 1350Q1060 1310 1200 1250L1400 1220", 80, 0.48], ["M130 1120L172 1240", 56, 0.0], ["M660 1310Q740 1230 830 1300L930 1390", 76, 0.0], ["M235 720L235 850 340 850 440 800", 44, 0.04], ["M470 1080L640 1110", 60, 0.14], ["M1060 1180Q1200 1120 1360 1100 1480 1090 1580 1010", 30, 0.0], ["M320 1090Q420 1180 340 1300", 80, 0.22], ["M40 1180L80 1200M150 1350H180", 44, 0.42]],
    e: [[62, 1060, 30, 52, 0.0], [290, 1355, 50, 48, 0.0], [530, 1350, 70, 40, 0.0], [70, 1360, 26, 36, 0.0], [242, 530, 20, 90, 0.0], [640, 820, 60, 28, 0.0]] },
  { f: "b", b: 22, o: 0.8, p: [["M230 715Q380 690 500 600", 76, 0.41], ["M1060 500Q1300 460 1390 510 1450 570 1410 650", 76, 0.41], ["M1060 610Q1250 590 1400 640", 90, 0.42], ["M1160 650H1370", 50, 0.46], ["M1230 552H1340", 38, 0.0], ["M640 410L680 515", 56, 0.03], ["M640 540Q700 610 740 590 760 520 715 430", 46, 0.4], ["M590 660Q650 600 710 636 760 624 790 590", 30, 0.0], ["M650 700Q560 760 610 860", 60, 0.36], ["M700 670Q780 820 890 890", 84, 0.43], ["M910 490L865 580 885 640 866 760Q880 835 960 840 1050 870 1200 820L1440 790", 34, 0.0], ["M895 570L925 690Q890 760 960 808L1010 805", 42, 0.52], ["M940 590L985 650", 44, 0.04], ["M1320 770L1440 665", 34, 0.0], ["M620 915Q720 850 800 920", 70, 0.56], ["M900 920H1290", 70, 0.54], ["M1290 910L1440 880", 56, 0.38], ["M-20 600Q70 540 180 500", 26, 0.02], ["M330 440Q350 380 330 330", 50, 0.2], ["M800 500V620", 70, 0.36], ["M1350 765L1500 770", 26, 0.34]],
    e: [[418, 410, 28, 50, 0.0], [675, 770, 50, 64, 0.0], [720, 825, 34, 22, 0.0], [1505, 650, 26, 70, 0.0], [1220, 755, 64, 38, 0.04], [1100, 740, 22, 34, 0.03], [1520, 895, 22, 36, 0.0], [835, 905, 32, 20, 0.0], [810, 680, 24, 32, 0.1]] },
  { f: "a", b: 19, o: 0.92, p: [["M150 345Q188 400 184 600 184 760 148 880 128 780 125 640 80 540 100 440Z", 0, 0.8], ["M110 965L310 955", 40, 0.6]], e: [[62, 465, 34, 80, 0.72], [50, 820, 40, 150, 0.7], [670, 962, 110, 40, 0.68], [600, 1010, 60, 24, 0.57], [1040, 1375, 80, 28, 0.66], [310, 400, 14, 100, 0.42], [228, 560, 12, 90, 0.25], [70, 1060, 18, 40, 0.0]] },
  { f: "a", b: 11, o: 0.75, p: [["M855 1000Q900 960 975 960L985 1010M915 1045L950 1060 960 1130", 24, 0.0], ["M655 1280L700 1240", 24, 0.0], ["M1200 1120Q1300 1110 1400 1080L1480 1070", 16, 0.02]] },
  { f: "a", b: 12, p: [["M866 1190L898 1240 940 1300", 34, 0.73]], e: [[680, 961, 64, 20, 0.72]] },
  { f: "b", b: 11, o: 0.8, p: [["M1385 500Q1450 580 1395 660", 42, 0.56], ["M1380 715L1420 695M1240 550H1270M955 755H985M1010 725H1025", 20, 0.0], ["M870 560V600M870 730L875 800", 18, 0.0], ["M650 500L690 520", 18, 0.02]], e: [[1418, 600, 16, 44, 0.68]] },
  { f: "a", b: 11, p: [["M140 410Q172 500 175 620L162 720 144 650Q110 540 118 460Z", 0, 0.92], ["M138 490L153 600", 22, 1], ["M238 495L244 535", 22, 0.02]] },
];
const FRAMES = { g: undefined, a: "translate(-25 190) scale(.408 .3333)", b: "translate(605 340) scale(.357 .3333)" };
const TABLE = [[46, 54, 142], [52, 68, 152], [65, 84, 163], [80, 106, 180], [108, 136, 191], [144, 160, 187], [176, 172, 158], [199, 143, 119], [187, 92, 68], [165, 40, 36], [140, 8, 24]];
const chan = (i) => TABLE.map((c) => (c[i] / 255).toFixed(3)).join(" ");
const Field = () => (
  <svg width="1148" height="641" viewBox="0 0 1148 641">
    <defs>
      <clipPath id="plotClip"><rect width="1148" height="641" /></clipPath>
      <linearGradient id="sweep" gradientUnits="userSpaceOnUse" x1="0" y1="240" x2="680" y2="60">
        <stop stopColor={gray(0.25)} /><stop offset=".3" stopColor={gray(0.18)} /><stop offset=".6" stopColor={gray(0.125)} /><stop offset="1" stopColor={gray(0.09)} />
      </linearGradient>
      {LAYERS.map((l, i) => (
        <filter key={i} id={`soft${i}`} filterUnits="userSpaceOnUse" x="-400" y="-300" width="2400" height="2000" colorInterpolationFilters="sRGB"><feGaussianBlur stdDeviation={l.b} /></filter>
      ))}
      <filter id="coolwarm" filterUnits="userSpaceOnUse" x="0" y="0" width="1148" height="641" colorInterpolationFilters="sRGB">
        <feComponentTransfer><feFuncR type="table" tableValues={chan(0)} /><feFuncG type="table" tableValues={chan(1)} /><feFuncB type="table" tableValues={chan(2)} /></feComponentTransfer>
      </filter>
    </defs>
    <g clipPath="url(#plotClip)"><g filter="url(#coolwarm)">
      <rect x="-100" y="-100" width="1400" height="900" fill="url(#sweep)" />
      {LAYERS.map((l, i) => (
        <g key={i} transform={FRAMES[l.f]} opacity={l.o || 1}><g filter={`url(#soft${i})`}>
          {(l.p || []).map(([d, w, v]) => <path key={d} d={d} fill={w ? "none" : gray(v)} stroke={w ? gray(v) : "none"} strokeWidth={w} strokeLinecap="round" strokeLinejoin="round" />)}
          {(l.e || []).map(([cx, cy, rx, ry, v, a]) => <ellipse key={cx + "," + cy} cx={cx} cy={cy} rx={rx} ry={ry} fill={gray(v)} transform={a ? `rotate(${a} ${cx} ${cy})` : undefined} />)}
        </g></g>
      ))}
    </g></g>
  </svg>
);

const MENUS = ["File", "Edit", "View", "Sources", "Filters", "Tools", "Catalyst", "Macros", "Help"];
const ARRAYS = ["nodeMaterialTypes", "p", "phi", "phiCorr", "phi_s0", "phid", "u", "v", "velocity", "vof"];
const T = ({ children, ...r }) => <Tool {...r}>{children}</Tool>;
const Checked = () => <Check><Tick /></Check>;

export default function App() {
  return (
    <Window>
      <GlobalStyle />
      <Defs />
      <TitleBar>ParaView 5.4.1 64-bit</TitleBar>
      <MenuBar>{MENUS.map((m) => <span key={m}><Mn>{m[0]}</Mn>{m.slice(1)}</span>)}</MenuBar>

      <ToolBar>
        <Handle $r={8} />
        <T><Folder /></T><T><Folder save /></T><Sep />
        <T><Server /></T><T><Server bad /></T><Sep />
        <T><Undo /></T><T><Undo redo /></T><Sep />
        <T><Cube kind="full" /></T><T><PickColor /></T>
        <T><Palette /><DropMark><Caret $c="#3c3b38" /></DropMark></T>
        <Handle $l={20} $r={9} />
        {["first", "prev", "play", "next", "last", "loop"].map((k) => <T key={k}><Play kind={k} /></T>)}
        <Handle $l={19} $r={8} />
        <Label $t={1}>Time:</Label>
        <TimeField>3.00057</TimeField>
        <Spin><SpinText>300</SpinText><SpinBtns><Caret $up $c="#b3b0ac" /><Caret /></SpinBtns></Spin>
        <Label $t={1}>(max is 300)</Label>
      </ToolBar>

      <ToolBar>
        <Handle $r={8} />
        <T $on><ColorMap /></T><T><EditMap /></T><T><Rescale /></T><T><Rescale t="c" /></T><T><Rescale t="t" /></T><T><Rescale eye /></T>
        <Combo $w={348} $h={40}>
          <svg width="36" height="8" viewBox="0 0 36 8"><circle cx="17.500" cy="4" r="2.500" fill="#fff" stroke="#a14a12" strokeWidth="1.600" /></svg>
          <ComboText>velocity</ComboText><Caret />
        </Combo>
        <Combo $w={142} $l={4}><ComboText $r={7}>Magnitude</ComboText><Caret /></Combo>
        <Handle $l={21} $r={7} />
        <Combo $w={150}><ComboText>Surface</ComboText><Caret /></Combo>
        <Handle $l={21} $r={7} />
        <T><ResetCam /></T><T><ZoomData /></T><T><ZoomBox /></T>
        <T><AxisIcon t="+X" up={GREEN} side={YEL} box={RED} /></T>
        <T><AxisIcon t="-X" up={GREEN} side={YEL} box={RED} /></T>
        <T><AxisIcon t="+Y" up={GREEN} side={RED} box={YEL} /></T>
        <T><AxisIcon t="-Y" up={GREEN} side={RED} box={YEL} /></T>
        <T><AxisIcon t="+Z" up={YEL} side={RED} box={GREEN} /></T>
        <T><AxisIcon t="-Z" up={YEL} side={RED} box={GREEN} /></T>
        <T><Rotate /></T><T><Rotate neg /></T>
        <Handle $l={21} $r={7} />
        <T $on><ShowAxes /></T><T><Center /></T><T><Center kind="cross" /></T><T><Center kind="pick" /></T>
        <Handle $l={21} />
      </ToolBar>

      <ToolBar $h={70}>
        <Handle $r={7} />
        {[<Calc />, <Contour />, <Cube kind="clip" />, <Cube kind="slice" />, <Cube kind="thr" />, <Cube kind="off" />, <Glyph />, <Stream />, <Warp />, <Group />, <Extract />].map((ic, i) => <T key={i} $w={58}>{ic}</T>)}
        <Handle $l={19} $r={7} />
        {[<SelBox />, <TimePlot />, <LinePlot />, <TimePlot box />, <Probe />].map((ic, i) => <T key={i} $w={58}>{ic}</T>)}
      </ToolBar>

      <Main>
        <Dock>
          <DockTitle $h={33}><DockName>Pipeline Browser</DockName><DockBtn><Win /></DockBtn><DockBtn><Win x /></DockBtn></DockTitle>
          <Tree>
            <TreeRow $h={42}><Branch /><TreeEye /><TreeItem $h={40} $t={6}><TreeIcon $t={-1} $l={4}><Host /></TreeIcon>builtin:</TreeItem></TreeRow>
            <TreeRow $h={34}><TreeEye><Eye /></TreeEye><TreeItem $sel $h={34} $t={2}><TreeIcon $t={-1} $l={0}><GreenCube /></TreeIcon>dambreak.xmf</TreeItem></TreeRow>
          </Tree>
          <Splitter />
          <Tabs><Tab $w={198} $p={21}>Output Me…</Tab><Tab $on $w={121} $p={27}>Pro…</Tab><Tab $w={133} $p={26}>Infor…</Tab></Tabs>
          <DockTitle $h={51}><DockName>Properties</DockName><DockBtn><Win /></DockBtn><DockBtn><Win x /></DockBtn></DockTitle>
          <ButtonRow $b={12}>
            <Button $off $w={118}><ApplyIcon /><span><Mn $w={1} $o={3}>A</Mn>pply</span></Button>
            <Button $off $w={119}><ResetIcon /><span><Mn $w={1} $o={3}>R</Mn>eset</span></Button>
            <Button $w={129}><DelIcon /><span><Mn $w={1} $o={3}>D</Mn>elete</span></Button>
            <Button $w={50}><HelpText>?</HelpText></Button>
          </ButtonRow>
          <ButtonRow $b={12}><Search>Search ... (use Esc to clear t…</Search><Button $w={40} $h={39}><Gear /></Button></ButtonRow>
          <ScrollArea>
            <ScrollBody>
              <GroupHead><Minus /><GroupName>Properties (dambreak.xmf)</GroupName></GroupHead>
              <ListHead><Checked /><RowText>Point Arrays</RowText></ListHead>
              <List $h={277}>{ARRAYS.map((a) => <ListRow key={a}><Checked /><RowIcon><Points /></RowIcon><RowText>{a}</RowText></ListRow>)}</List>
              <ListHead><Checked /><RowText>Cell Arrays</RowText></ListHead>
              <List $h={53}><ListRow><Checked /><RowIcon><Cell /></RowIcon><RowText>elementMaterialTypes</RowText></ListRow></List>
              <ListHead />
            </ScrollBody>
            <Scroll><ScrollUp><Caret $up /></ScrollUp><Thumb /></Scroll>
          </ScrollArea>
        </Dock>

        <View>
          <ViewTabs>
            <ViewTab><Square />Layout #1<Label $l={2}><DockBtn><Win x /></DockBtn></Label></ViewTab>
            <AddTab>+</AddTab>
          </ViewTabs>
          <MiniBar>
            <M k="cam" /><M k="cam2" /><MiniSep /><M k="2D" /><M k="cam3" /><MiniSep />
            <M k="plus" /><M k="minus" /><M k="pm" /><MiniSep />
            {["t1", "t2", "c1", "c2", "p1", "p2", "blk", "t3", "t4", "q1", "q2", "x"].map((k) => <M key={k} k={k} />)}
          </MiniBar>
          <Frame>
            <Canvas>
              <Plot><Field /></Plot>
              <Axis><svg width="11" height="12" viewBox="0 0 11 12"><path d="M5 1l5 12H0z" fill="#e8e800" /></svg>Y</Axis>
            </Canvas>
          </Frame>
        </View>
      </Main>
    </Window>
  );
}
